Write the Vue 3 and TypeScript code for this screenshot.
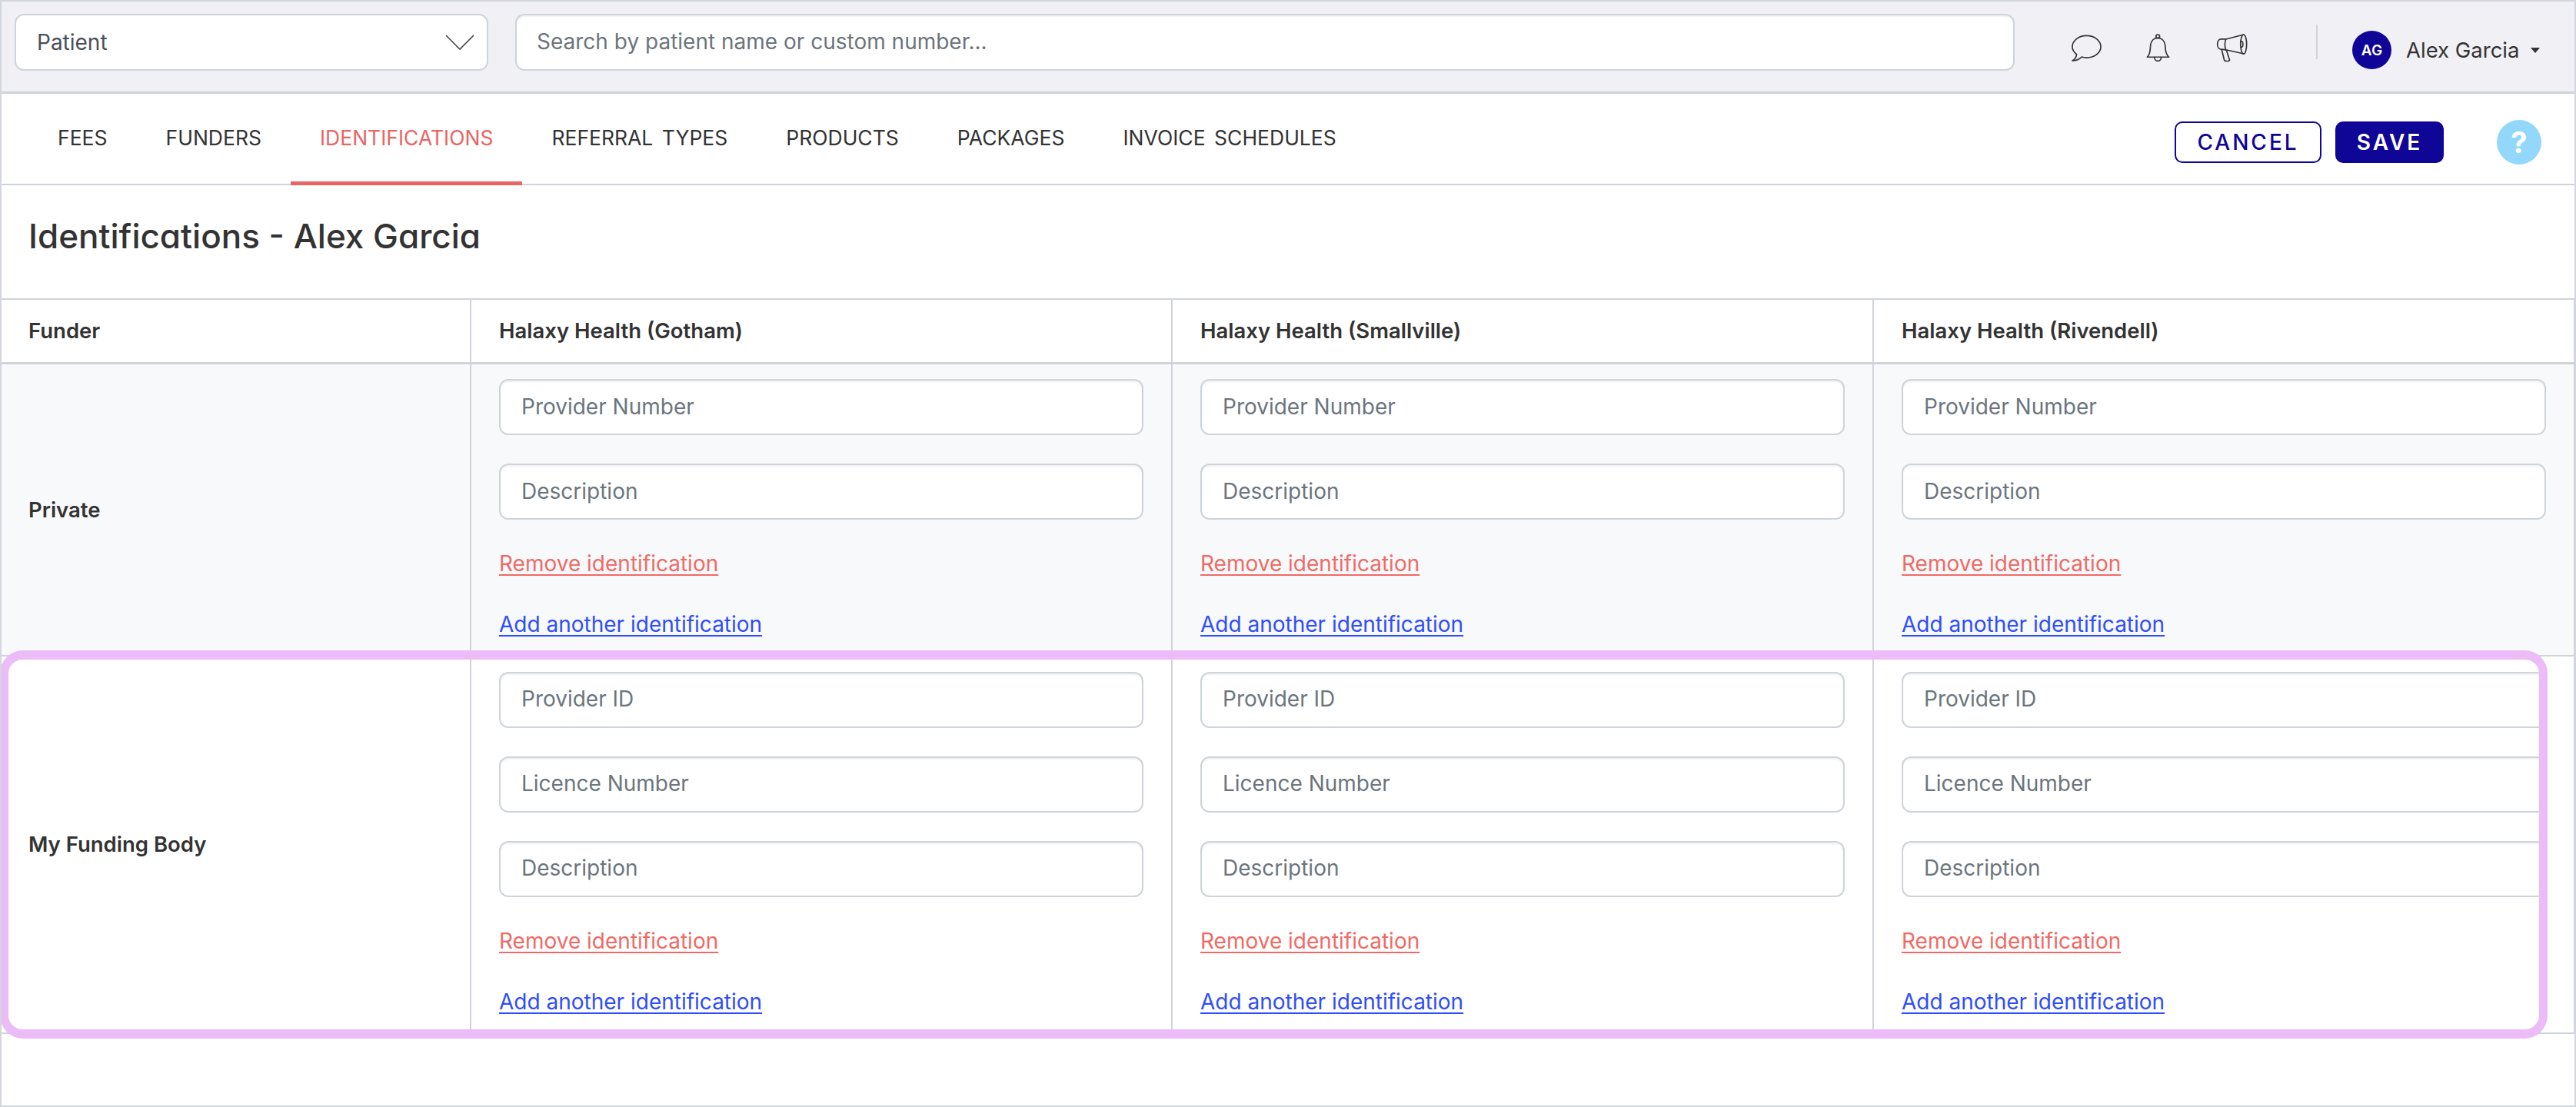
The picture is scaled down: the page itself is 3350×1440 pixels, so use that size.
<script setup lang="ts">
interface FunderRow {
  name: string
  fields: string[]
  shaded: boolean
}

const tabs: string[] = ['Fees', 'Funders', 'Identifications', 'Referral Types', 'Products', 'Packages', 'Invoice Schedules']
const locations: string[] = ['Halaxy Health (Gotham)', 'Halaxy Health (Smallville)', 'Halaxy Health (Rivendell)']
const rows: FunderRow[] = [
  { name: 'Private', fields: ['Provider Number', 'Description'], shaded: true },
  { name: 'My Funding Body', fields: ['Provider ID', 'Licence Number', 'Description'], shaded: false },
]
</script>

<template>
  <div class="page">
    <header class="topbar">
      <div class="select">
        <span>Patient</span>
        <svg class="chevron" viewBox="0 0 38 20"><path d="M1 1 L19 19 L37 1" /></svg>
      </div>
      <input class="search" type="text" placeholder="Search by patient name or custom number..." />
      <div class="tools">
        <svg class="ico chat" viewBox="100 95 118 104">
          <path d="M103 197 C112 192 118 186 120 172 C108 163 103 152 103 142 C103 118 128 98 159 98 C190 98 215 118 215 142 C215 166 190 185 159 185 C152 185 146 184 140 182 C130 191 116 197 103 197 Z" />
        </svg>
        <svg class="ico bell" viewBox="393 90 92 110">
          <circle cx="438" cy="100" r="7" />
          <path d="M397 180 C412 165 408 145 410 132 C413 115 425 106 438 106 C451 106 463 115 466 132 C468 145 464 165 481 180 Z" />
          <path d="M425 181 C425 200 451 200 451 181" />
        </svg>
        <svg class="ico horn" viewBox="662 90 124 110">
          <ellipse cx="770" cy="130" rx="12" ry="38" />
          <path d="M768 93 L700 110 L682 110 C662 110 662 150 682 150 L700 152 L768 167" />
          <path d="M700 110 C696 122 696 140 700 152" />
          <path d="M760 118 C770 118 770 142 760 142" />
          <path d="M684 152 L694 192 C695 198 716 198 715 192 L703 155" />
        </svg>
      </div>
      <div class="user">
        <span class="avatar">AG</span>
        <span class="username">Alex Garcia</span>
        <span class="caret"></span>
      </div>
    </header>

    <nav class="tabs">
      <a v-for="tab in tabs" :key="tab" class="tab" :class="{ active: tab === 'Identifications' }">{{ tab }}</a>
      <div class="actions">
        <button class="btn outline" type="button">CANCEL</button>
        <button class="btn solid" type="button">SAVE</button>
        <span class="help">?</span>
      </div>
    </nav>

    <h1 class="title">Identifications - Alex Garcia</h1>

    <div class="table">
      <div class="cell head first">Funder</div>
      <div v-for="loc in locations" :key="loc" class="cell head">{{ loc }}</div>

      <template v-for="row in rows" :key="row.name">
        <div class="cell funder" :class="{ shaded: row.shaded }">{{ row.name }}</div>
        <div v-for="loc in locations" :key="row.name + loc" class="cell entry" :class="{ shaded: row.shaded }">
          <input v-for="f in row.fields" :key="f" class="field" type="text" :placeholder="f" />
          <a class="link remove">Remove identification</a>
          <a class="link add">Add another identification</a>
        </div>
      </template>
    </div>

    <div class="highlight"></div>
  </div>
</template>

<style scoped>
.page {
  position: relative;
  box-sizing: border-box;
  width: 3350px;
  height: 1440px;
  border: 2px solid #d3d6dc;
  background: #fff;
  color: #333;
  font-family: Inter, "Liberation Sans", sans-serif;
  overflow: hidden;
}
.topbar {
  box-sizing: border-box;
  height: 120px;
  display: flex;
  align-items: flex-start;
  padding: 16px 0 0 17px;
  background: #f0f0f5;
  border-bottom: 3px solid #d0d4da;
}
.select {
  box-sizing: border-box;
  width: 616px;
  height: 74px;
  display: flex;
  align-items: center;
  justify-content: space-between;
  padding: 0 16px 0 27px;
  background: #fff;
  border: 2px solid #ced4da;
  border-radius: 12px;
  font-size: 28px;
  color: #495057;
}
.chevron {
  width: 38px;
  height: 20px;
}
.chevron path {
  fill: none;
  stroke: #444;
  stroke-width: 1.6;
}
.search {
  box-sizing: border-box;
  width: 1950px;
  height: 74px;
  margin-left: 35px;
  padding: 0 26px 3px;
  background: #fff;
  border: 2px solid #ced4da;
  border-radius: 12px;
  box-shadow: inset 0 2px 2px rgba(0, 0, 0, 0.06);
  font: 28px Inter, "Liberation Sans", sans-serif;
}
.search::placeholder,
.field::placeholder {
  color: #6c757d;
  opacity: 1;
}
.tools {
  display: flex;
  align-items: center;
  height: 40px;
  margin: 24px 0 0 74px;
}
.ico {
  fill: none;
  stroke: #333;
  stroke-width: 5;
  stroke-linejoin: round;
  stroke-linecap: round;
}
.chat {
  width: 39px;
  height: 35px;
}
.bell {
  width: 31px;
  height: 37px;
  margin-left: 58px;
}
.horn {
  width: 41px;
  height: 37px;
  margin-left: 60px;
}
.user {
  display: flex;
  align-items: center;
  height: 50px;
  margin: 22px 0 0 136px;
  position: relative;
}
.user::before {
  content: "";
  position: absolute;
  left: -47px;
  top: -8px;
  height: 45px;
  width: 2px;
  background: #d0d4da;
}
.avatar {
  width: 51px;
  height: 50px;
  border-radius: 50%;
  background: #0f0596;
  color: #fff;
  font-size: 19px;
  font-weight: 600;
  display: flex;
  align-items: center;
  justify-content: center;
}
.username {
  margin-left: 19px;
  font-size: 27.5px;
}
.caret {
  margin-left: 15px;
  width: 0;
  height: 0;
  border-left: 6px solid transparent;
  border-right: 6px solid transparent;
  border-top: 7px solid #333;
}
.tabs {
  box-sizing: border-box;
  height: 119px;
  display: flex;
  align-items: stretch;
  padding-left: 35px;
  border-bottom: 2px solid #d0d4da;
}
.tab {
  display: flex;
  align-items: center;
  padding: 0 38px;
  margin-bottom: -2px;
  font-size: 26.5px;
  word-spacing: 4px;
  text-transform: uppercase;
  color: #333;
  border-bottom: 5px solid transparent;
}
.tab.active {
  color: #ea6464;
  border-bottom-color: #ea6464;
}
.actions {
  margin-left: auto;
  display: flex;
  align-items: center;
  padding: 8px 43px 0 0;
}
.btn {
  box-sizing: border-box;
  height: 54px;
  border-radius: 10px;
  font: 500 28px Inter, "Liberation Sans", sans-serif;
  letter-spacing: 3px;
}
.outline {
  width: 191px;
  background: #fff;
  border: 2px solid #0f0596;
  color: #0f0596;
}
.solid {
  width: 141px;
  margin-left: 18px;
  background: #0f0596;
  border: 2px solid #0f0596;
  color: #fff;
  font-weight: 600;
}
.help {
  width: 58px;
  height: 58px;
  margin-left: 69px;
  border-radius: 50%;
  background: #93d8fa;
  color: #fff;
  font-size: 38px;
  font-weight: 700;
  display: flex;
  align-items: center;
  justify-content: center;
}
.title {
  box-sizing: border-box;
  height: 149px;
  margin: 0;
  padding: 40px 0 0 35px;
  font-size: 44px;
  line-height: 52px;
  font-weight: 500;
  color: #333;
  font-feature-settings: "cv11";
  border-bottom: 2px solid #d0d4da;
}
.table {
  display: grid;
  grid-template-columns: 611px 912px 912px 912px;
}
.cell {
  box-sizing: border-box;
  border-right: 2px solid #d0d4da;
  border-bottom: 2px solid #d0d4da;
}
.head {
  height: 83.5px;
  display: flex;
  align-items: center;
  padding-left: 36px;
  font-size: 27.5px;
  font-weight: 600;
  border-bottom: 3px solid #d0d4da;
}
.head.first,
.funder {
  padding-left: 35px;
}
.funder {
  display: flex;
  align-items: center;
  font-size: 27.5px;
  font-weight: 600;
}
.entry {
  display: flex;
  flex-direction: column;
  align-items: flex-start;
  padding: 19.5px 36px 20px;
}
.shaded {
  background: #f8f9fb;
}
.field {
  box-sizing: border-box;
  width: 838px;
  height: 73px;
  flex: none;
  margin-bottom: 37px;
  padding: 0 27px 2px;
  background: #fff;
  border: 2px solid #ced4da;
  border-radius: 12px;
  box-shadow: inset 0 2px 2px rgba(0, 0, 0, 0.06);
  font: 28px Inter, "Liberation Sans", sans-serif;
}
.link {
  height: 40px;
  line-height: 40px;
  font-size: 28px;
  text-decoration: underline;
  text-underline-offset: 4px;
}
.remove {
  color: #f06a65;
}
.add {
  margin-top: 39px;
  color: #2e4dff;
}
.highlight {
  position: absolute;
  left: -2px;
  top: 844px;
  width: 3313px;
  height: 505px;
  box-sizing: border-box;
  border: solid #ebbcf7;
  border-width: 12px 11px;
  border-radius: 30px;
  pointer-events: none;
}
</style>
